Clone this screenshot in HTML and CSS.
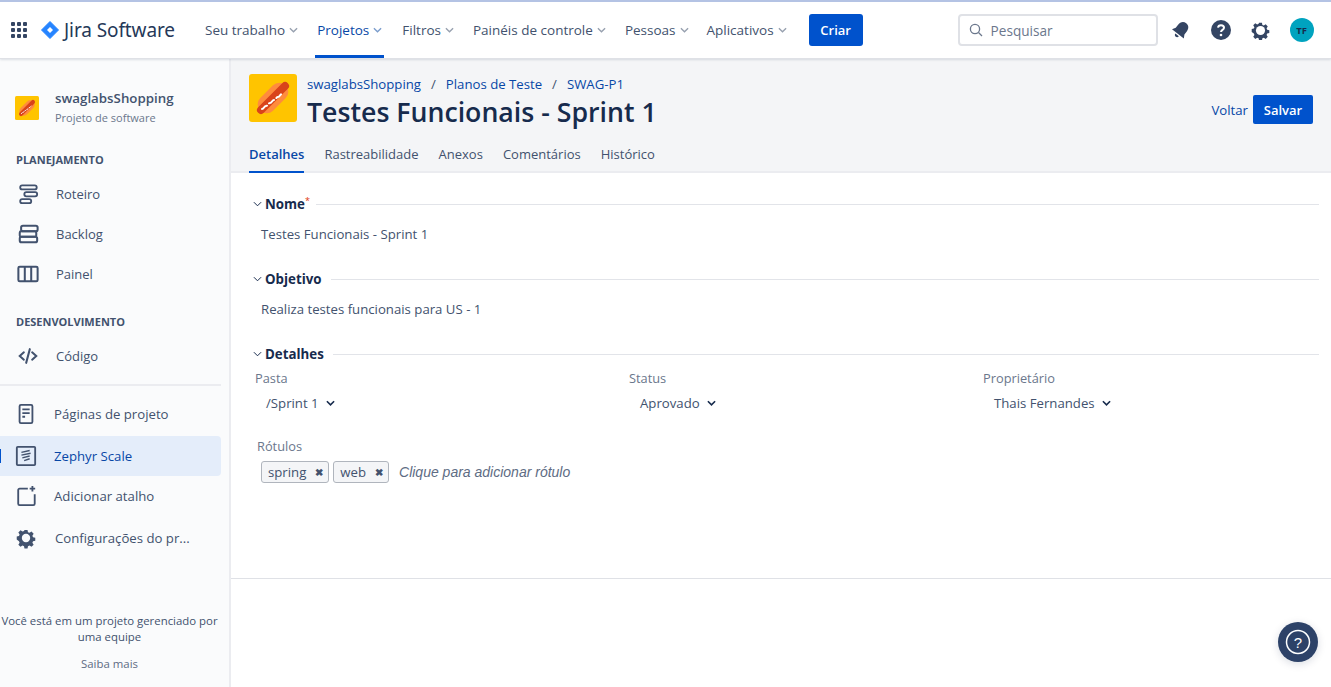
FILE: index.html
```html
<!DOCTYPE html>
<html lang="pt">
<head>
    <meta charset="UTF-8">
    <meta name="viewport" content="width=device-width, initial-scale=1.0">
    <title>Testes Funcionais - Sprint 1</title>
    <link rel="stylesheet" href="styles.css">
</head>
<body>
    <header class="topnav">
        <svg class="apps" width="18" height="18" viewBox="0 0 18 18" fill="#344563">
            <rect x="1" y="1" width="4" height="4" rx="1"/><rect x="7" y="1" width="4" height="4" rx="1"/><rect x="13" y="1" width="4" height="4" rx="1"/>
            <rect x="1" y="7" width="4" height="4" rx="1"/><rect x="7" y="7" width="4" height="4" rx="1"/><rect x="13" y="7" width="4" height="4" rx="1"/>
            <rect x="1" y="13" width="4" height="4" rx="1"/><rect x="7" y="13" width="4" height="4" rx="1"/><rect x="13" y="13" width="4" height="4" rx="1"/>
        </svg>
        <svg class="logo" width="18" height="18" viewBox="0 0 18 18">
            <path d="M9 0.5 17.5 9 9 17.5 0.5 9Z" fill="#2684ff" stroke="#2684ff" stroke-linejoin="round"/>
            <path d="M9 6 12 9 9 12 6 9Z" fill="#fff"/>
        </svg>
        <span class="brand">Jira Software</span>
        <nav class="menu">
            <a class="menu-item">Seu trabalho<svg class="caret" viewBox="0 0 10 6"><path d="M1 1l4 4 4-4"/></svg></a>
            <a class="menu-item active">Projetos<svg class="caret" viewBox="0 0 10 6"><path d="M1 1l4 4 4-4"/></svg></a>
            <a class="menu-item">Filtros<svg class="caret" viewBox="0 0 10 6"><path d="M1 1l4 4 4-4"/></svg></a>
            <a class="menu-item">Painéis de controle<svg class="caret" viewBox="0 0 10 6"><path d="M1 1l4 4 4-4"/></svg></a>
            <a class="menu-item tight">Pessoas<svg class="caret" viewBox="0 0 10 6"><path d="M1 1l4 4 4-4"/></svg></a>
            <a class="menu-item">Aplicativos<svg class="caret" viewBox="0 0 10 6"><path d="M1 1l4 4 4-4"/></svg></a>
        </nav>
        <button class="btn-create">Criar</button>
        <div class="search">
            <svg width="14" height="14" viewBox="0 0 14 14" fill="none" stroke="#6b778c" stroke-width="1.3"><circle cx="6" cy="6" r="4.6"/><path d="M9.5 9.5 13 13"/></svg>
            <span>Pesquisar</span>
        </div>
        <svg class="top-icon bell" width="20" height="20" viewBox="0 0 20 20" fill="#344563">
            <g transform="rotate(38 10 10)">
                <path d="M10 1.500c-3.800 0-5.500 3-5.500 6.500v3.500L2.500 15h15l-2-3.500V8c0-3.500-1.700-6.500-5.500-6.500Z"/>
                <path d="M7.800 16.300h4.400c0 1.400-1 2.300-2.200 2.300s-2.200-.9-2.200-2.300Z"/>
            </g>
        </svg>
        <svg class="top-icon help" width="20" height="20" viewBox="0 0 20 20">
            <circle cx="10" cy="10" r="10" fill="#344563"/>
            <path d="M7 7.700c.2-1.700 1.500-2.500 3-2.500 1.700 0 3 1 3 2.500 0 2.200-3 2.200-3 4.300" fill="none" stroke="#fff" stroke-width="2"/>
            <circle cx="10" cy="15" r="1.300" fill="#fff"/>
        </svg>
        <svg class="top-icon gear" width="19" height="19" viewBox="0 0 20 20"><path d="M8.300 1h3.400l.5 2.500 1.700.7 2.200-1.400 2.400 2.400-1.400 2.200.7 1.700 2.500.5v3.400l-2.500.5-.7 1.700 1.400 2.200-2.400 2.400-2.200-1.400-1.700.7-.5 2.500H8.300l-.5-2.500-1.700-.7-2.200 1.400-2.400-2.400 1.400-2.200-.7-1.700L-.3 11.700V8.300l2.500-.5.700-1.700-1.400-2.200 2.400-2.400 2.200 1.400 1.700-.7Z" transform="translate(1 1) scale(.9)" fill="#344563"/><circle cx="10" cy="10" r="4.800" fill="#fff"/></svg>
        <span class="avatar">TF</span>
    </header>

    <div class="layout">
        <aside class="sidebar">
            <div class="project">
                <svg class="hotdog" width="24" height="24" viewBox="0 0 48 48">
                    <rect width="48" height="48" rx="3" fill="#ffc400"/>
                    <rect x="6" y="15" width="36" height="18" rx="9" fill="#ff8b3d" transform="rotate(-45 24 24)"/>
                    <rect x="3" y="20" width="42" height="8" rx="4" fill="#d9431a" transform="rotate(-45 24 24)"/>
                    <path d="M13 35c2 0 2-3 4-3s2-3 4-3 2-3 4-3 2-3 4-3 2-3 4-3" fill="none" stroke="#fff" stroke-width="2" stroke-linecap="round" stroke-dasharray="6 3"/>
                </svg>
                <div>
                    <div class="project-name">swaglabsShopping</div>
                    <div class="project-type">Projeto de software</div>
                </div>
            </div>
            <h4 class="side-title">PLANEJAMENTO</h4>
            <a class="side-item">
                <svg class="side-icon" viewBox="0 0 24 24" fill="none" stroke="#42526e" stroke-width="2"><rect x="3.500" y="2.500" width="18" height="4.500" rx="2.200"/><rect x="8" y="10" width="14" height="4.500" rx="2.200"/><rect x="3.500" y="17.500" width="12" height="4.500" rx="2.200"/></svg>
                Roteiro
            </a>
            <a class="side-item">
                <svg class="side-icon" viewBox="0 0 24 24" fill="none" stroke="#42526e" stroke-width="2.200"><rect x="4.500" y="3" width="18" height="6" rx="2"/><rect x="3" y="9" width="18" height="6" rx="1.500"/><rect x="3" y="15" width="19" height="6" rx="2"/></svg>
                Backlog
            </a>
            <a class="side-item">
                <svg class="side-icon" viewBox="0 0 24 24" fill="none" stroke="#42526e" stroke-width="2.200"><rect x="1.500" y="4" width="21" height="16" rx="1.500"/><path d="M8.500 4v16M15.500 4v16"/></svg>
                Painel
            </a>
            <h4 class="side-title dev">DESENVOLVIMENTO</h4>
            <a class="side-item">
                <svg class="side-icon" viewBox="0 0 24 24" fill="none" stroke="#42526e" stroke-width="2.200" stroke-linecap="round"><path d="M7.500 8l-4.500 4 4.500 4M16.500 8l4.500 4-4.500 4M14 4.500l-4 15"/></svg>
                Código
            </a>
            <hr class="side-sep">
            <a class="side-item alt">
                <svg class="side-icon" viewBox="0 0 24 24" fill="none" stroke="#42526e" stroke-width="2"><rect x="5" y="2" width="14" height="20" rx="1.500"/><path d="M8 7h8M8 11h8M8 15h3"/></svg>
                Páginas de projeto
            </a>
            <a class="side-item alt current">
                <svg class="side-icon" viewBox="0 0 24 24" fill="none" stroke="#42526e" stroke-width="2"><rect x="2" y="2" width="20" height="20" rx="1"/><path d="M7 8l9-2M7 11l10-2M8 14l8-2M10 17l6-2" stroke-width="1.500"/></svg>
                Zephyr Scale
            </a>
            <a class="side-item alt">
                <svg class="side-icon" viewBox="0 0 24 24" fill="none" stroke="#42526e" stroke-width="2"><path d="M14 4H5a1.500 1.500 0 0 0-1.500 1.500v15A1.500 1.500 0 0 0 5 22h15a1.500 1.500 0 0 0 1.500-1.500V10M19 1v6M16 4h6"/></svg>
                Adicionar atalho
            </a>
            <a class="side-item alt last">
                <svg class="side-icon" viewBox="0 0 22 22"><path d="M8.300 1h3.400l.5 2.500 1.700.7 2.200-1.400 2.400 2.400-1.400 2.200.7 1.700 2.500.5v3.400l-2.500.5-.7 1.700 1.400 2.200-2.400 2.400-2.200-1.400-1.700.7-.5 2.500H8.300l-.5-2.500-1.700-.7-2.200 1.400-2.400-2.400 1.400-2.200-.7-1.700L-.3 11.700V8.300l2.500-.5.700-1.700-1.400-2.200 2.400-2.400 2.200 1.400 1.700-.7Z" transform="translate(2 2) scale(.9)" fill="#42526e"/><circle cx="11" cy="11" r="4.200" fill="#fafbfc"/></svg>
                Configurações do pr...
            </a>
            <div class="side-foot">
                <p>Você está em um projeto gerenciado por uma equipe</p>
                <p class="more">Saiba mais</p>
            </div>
        </aside>

        <main class="content">
            <section class="page-head">
                <div class="head-row">
                    <svg class="hotdog-big" width="48" height="48" viewBox="0 0 48 48">
                        <rect width="48" height="48" rx="3" fill="#ffc400"/>
                        <rect x="6" y="15" width="36" height="18" rx="9" fill="#ff8b3d" transform="rotate(-45 24 24)"/>
                        <rect x="3" y="20" width="42" height="8" rx="4" fill="#d9431a" transform="rotate(-45 24 24)"/>
                        <path d="M13 35c2 0 2-3 4-3s2-3 4-3 2-3 4-3 2-3 4-3 2-3 4-3" fill="none" stroke="#fff" stroke-width="2" stroke-linecap="round" stroke-dasharray="6 3"/>
                    </svg>
                    <div class="head-text">
                        <div class="crumbs"><a>swaglabsShopping</a><i>/</i><a>Planos de Teste</a><i>/</i><a>SWAG-P1</a></div>
                        <h1>Testes Funcionais - Sprint 1</h1>
                    </div>
                    <div class="head-actions">
                        <a class="back">Voltar</a>
                        <button class="btn-save">Salvar</button>
                    </div>
                </div>
                <div class="tabs">
                    <a class="tab active">Detalhes</a>
                    <a class="tab">Rastreabilidade</a>
                    <a class="tab">Anexos</a>
                    <a class="tab">Comentários</a>
                    <a class="tab">Histórico</a>
                </div>
            </section>

            <section class="form">
                <div class="group-title">
                    <svg class="chev" viewBox="0 0 10 6"><path d="M1 1l4 4 4-4"/></svg>
                    <span>Nome<sup>*</sup></span>
                </div>
                <p class="value">Testes Funcionais - Sprint 1</p>

                <div class="group-title">
                    <svg class="chev" viewBox="0 0 10 6"><path d="M1 1l4 4 4-4"/></svg>
                    <span>Objetivo</span>
                </div>
                <p class="value">Realiza testes funcionais para US - 1</p>

                <div class="group-title">
                    <svg class="chev" viewBox="0 0 10 6"><path d="M1 1l4 4 4-4"/></svg>
                    <span>Detalhes</span>
                </div>
                <div class="fields">
                    <div class="field">
                        <label>Pasta</label>
                        <div class="select">/Sprint 1<svg class="chev-bold" viewBox="0 0 10 6"><path d="M1 1l4 4 4-4"/></svg></div>
                    </div>
                    <div class="field">
                        <label>Status</label>
                        <div class="select">Aprovado<svg class="chev-bold" viewBox="0 0 10 6"><path d="M1 1l4 4 4-4"/></svg></div>
                    </div>
                    <div class="field">
                        <label>Proprietário</label>
                        <div class="select">Thais Fernandes<svg class="chev-bold" viewBox="0 0 10 6"><path d="M1 1l4 4 4-4"/></svg></div>
                    </div>
                </div>
                <div class="labels">
                    <label>Rótulos</label>
                    <div class="tag-row">
                        <span class="tag">spring<b>✖</b></span>
                        <span class="tag">web<b>✖</b></span>
                        <em>Clique para adicionar rótulo</em>
                    </div>
                </div>
            </section>
            <div class="bottom-line"></div>
        </main>
    </div>

    <button class="fab">
        <svg width="26" height="26" viewBox="0 0 26 26" fill="none" stroke="#fff" stroke-width="1.500"><circle cx="13" cy="13" r="11.500"/></svg>
        <span>?</span>
    </button>
</body>
</html>
```

FILE: styles.css
```css
* {
    box-sizing: border-box;
}

body {
    margin: 0;
    height: 687px;
    overflow: hidden;
    display: flex;
    flex-direction: column;
    background: #fff;
    color: #42526e;
    font-family: "Open Sans", "Noto Sans", "Liberation Sans", sans-serif;
    font-size: 13px;
}

a {
    text-decoration: none;
}

/* barra superior */
.topnav {
    height: 59px;
    flex: none;
    display: flex;
    align-items: center;
    border-top: 2px solid #b4c3e4;
    border-bottom: 1px solid #dfe1e6;
    box-shadow: 0 1px 2px rgba(9, 30, 66, .12);
    padding-left: 10px;
    position: relative;
    z-index: 2;
    background: #fff;
}

.logo {
    margin-left: 13px;
}

.brand {
    margin-left: 5px;
    width: 141px;
    font-family: "Noto Sans", sans-serif;
    font-size: 19px;
    color: #253858;
    letter-spacing: -.1px;
}

.menu {
    display: flex;
    height: 100%;
}

.menu-item {
    display: flex;
    align-items: center;
    gap: 4px;
    height: 100%;
    padding: 0 7px 0 0;
    margin-right: 12px;
    color: #42526e;
    font-size: 13.500px;
    border-bottom: 3px solid transparent;
    border-top: 3px solid transparent;
}

.menu-item.tight {
    margin-right: 11px;
}

.menu-item.active {
    color: #0747a6;
    border-bottom-color: #0052cc;
    padding: 0 2px;
    margin: 0 18px 0 -2px;
}

.caret {
    width: 9px;
    height: 6px;
    fill: none;
    stroke: #97a0af;
    stroke-width: 1.500;
}

.active .caret {
    stroke: #7a9ccc;
}

.btn-create {
    width: 54px;
    height: 32px;
    margin-left: 3px;
    border: 0;
    border-radius: 3px;
    background: #0052cc;
    color: #fff;
    font: 600 13px "Open Sans", sans-serif;
}

.search {
    width: 200px;
    height: 32px;
    margin-left: 95px;
    display: flex;
    align-items: center;
    gap: 8px;
    padding-left: 9px;
    border: 2px solid #dfe1e6;
    border-radius: 4px;
    color: #6b778c;
    font-size: 13.600px;
}

.bell {
    margin-left: 13px;
}

.help {
    margin-left: 20px;
}

.gear {
    margin-left: 20px;
}

.avatar {
    width: 24px;
    height: 24px;
    margin-left: 20px;
    border-radius: 50%;
    background: #00a3bf;
    color: #172b4d;
    font-size: 9.500px;
    font-weight: 700;
    display: flex;
    align-items: center;
    justify-content: center;
}

.layout {
    flex: 1;
    display: flex;
    min-height: 0;
}

/* menu lateral */
.sidebar {
    width: 231px;
    flex: none;
    display: flex;
    flex-direction: column;
    background: #fafbfc;
    border-right: 2px solid #ebecf0;
    padding-right: 8px;
}

.project {
    display: flex;
    align-items: center;
    gap: 16px;
    padding: 27px 0 0 15px;
    height: 71px;
}

.project-name {
    font-size: 13.300px;
    font-weight: 600;
    color: #42526e;
    line-height: 18px;
}

.project-type {
    margin-top: 2px;
    font-size: 11px;
    color: #6b778c;
    line-height: 18px;
}

.side-title {
    margin: 20px 0 4px 16px;
    height: 20px;
    line-height: 20px;
    font-size: 11px;
    font-weight: 700;
    color: #42526e;
}

.side-title.dev {
    margin-top: 18px;
}

.side-item {
    display: flex;
    align-items: center;
    gap: 17px;
    height: 40px;
    padding-left: 17px;
    color: #42526e;
    font-size: 13px;
}

.side-item.alt {
    gap: 17px;
    height: 40px;
    padding-left: 15px;
    font-size: 13.200px;
}

.side-item.last {
    margin-top: 2px;
    gap: 18px;
}

.side-icon {
    width: 22px;
    height: 22px;
    flex: none;
}

.side-sep {
    width: 100%;
    height: 2px;
    margin: 8px 0 8px;
    border: 0;
    background: #ebecf0;
}

.current {
    background: #e4edfa;
    border-radius: 0 4px 4px 0;
    color: #0747a6;
    margin: 2px 0 0;
    position: relative;
}

.current::before {
    content: "";
    position: absolute;
    left: 0;
    top: 13px;
    width: 1px;
    height: 14px;
    background: #0052cc;
}

.side-foot {
    margin: auto -8px 0 0;
    padding: 0 10px 15px 0;
    text-align: center;
    font-size: 11.400px;
    line-height: 16px;
    color: #42526e;
}

.side-foot p {
    margin: 0;
}

.side-foot .more {
    margin-top: 11px;
    color: #5e6c84;
}

/* conteudo */
.content {
    flex: 1;
    min-width: 0;
    display: flex;
    flex-direction: column;
}

.page-head {
    height: 114px;
    background: #f4f5f7;
    border-bottom: 2px solid #ebecf0;
    padding: 15px 18px 0 18px;
}

.head-row {
    display: flex;
    align-items: flex-start;
    height: 54px;
}

.hotdog-big {
    flex: none;
}

.head-text {
    margin-left: 10px;
}

.crumbs {
    height: 22px;
    line-height: 21px;
    font-size: 13.200px;
    color: #42526e;
}

.crumbs a {
    color: #0747a6;
}

.crumbs i {
    font-style: normal;
    margin: 0 10px;
}

h1 {
    margin: 0;
    font-size: 26.700px;
    line-height: 32px;
    font-weight: 600;
    color: #172b4d;
}

.head-actions {
    margin-left: auto;
    margin-top: 21px;
    display: flex;
    align-items: center;
    gap: 5px;
}

.back {
    color: #0747a6;
    font-size: 13.200px;
}

.btn-save {
    width: 60px;
    height: 29px;
    border: 0;
    border-radius: 2px;
    background: #0052cc;
    color: #fff;
    font: 600 13px "Open Sans", sans-serif;
}

.tabs {
    display: flex;
    gap: 20px;
    height: 43px;
}

.tab {
    display: flex;
    align-items: center;
    padding-top: 9px;
    color: #42526e;
    font-size: 13px;
    border-bottom: 2px solid transparent;
    height: 45px;
}

.tab.active {
    color: #0747a6;
    font-weight: 600;
    border-bottom-color: #0052cc;
}

.form {
    height: 405px;
    padding: 21px 12px 0 20px;
    color: #42526e;
}

.group-title {
    display: flex;
    align-items: center;
    gap: 0;
    height: 20px;
    font-size: 13.300px;
    font-weight: 700;
    color: #172b4d;
}

.group-title::after {
    content: "";
    flex: 1;
    height: 1px;
    margin-left: 9px;
    background: #e2e4e9;
}

.group-title sup {
    color: #de350b;
    font-size: 9px;
    font-weight: 400;
    line-height: 0;
    margin-right: -3px;
}

.chev {
    width: 9px;
    height: 6px;
    margin: 0 3px 0 2px;
    fill: none;
    stroke: #172b4d;
    stroke-width: 1.100;
}

.value {
    margin: 0 0 0 10px;
    height: 55px;
    padding-top: 10px;
    line-height: 20px;
    font-size: 13.200px;
    color: #42526e;
}

.fields {
    display: flex;
    margin: 5px 0 0 4px;
}

.field:nth-child(1) {
    width: 374px;
}

.field:nth-child(2) {
    width: 354px;
}

label {
    display: block;
    height: 19px;
    line-height: 18px;
    font-size: 12.800px;
    color: #6b778c;
}

.select {
    display: flex;
    align-items: center;
    gap: 7px;
    height: 30px;
    padding-left: 11px;
    font-size: 13.200px;
    color: #42526e;
}

.chev-bold {
    width: 9px;
    height: 6px;
    fill: none;
    stroke: #172b4d;
    stroke-width: 1.800;
}

.labels {
    margin: 19px 0 0 6px;
}

.tag-row {
    display: flex;
    align-items: center;
    gap: 4px;
    margin: 5px 0 0 4px;
    height: 22px;
}

.tag {
    display: flex;
    align-items: center;
    justify-content: space-between;
    height: 22px;
    padding: 0 5px 0 6px;
    gap: 9px;
    border: 1px solid #b0b5bd;
    border-radius: 3px;
    background: #f4f5f7;
    font-size: 13.200px;
    color: #42526e;
}

.tag b {
    font-size: 10px;
    color: #42526e;
}

.tag-row em {
    margin-left: 6px;
    font-family: "Liberation Sans", sans-serif;
    font-size: 14px;
    color: #5e6c84;
}

.bottom-line {
    height: 1px;
    background: #dfe1e6;
}

.fab {
    position: absolute;
    left: 1278px;
    top: 622px;
    width: 40px;
    height: 40px;
    padding: 0;
    border: 0;
    border-radius: 50%;
    background: #2d4268;
    box-shadow: 0 2px 8px rgba(9, 30, 66, .15);
    color: #fff;
    font-size: 15px;
    display: flex;
    align-items: center;
    justify-content: center;
}

.fab svg {
    position: absolute;
    left: 7px;
    top: 7px;
}
```
